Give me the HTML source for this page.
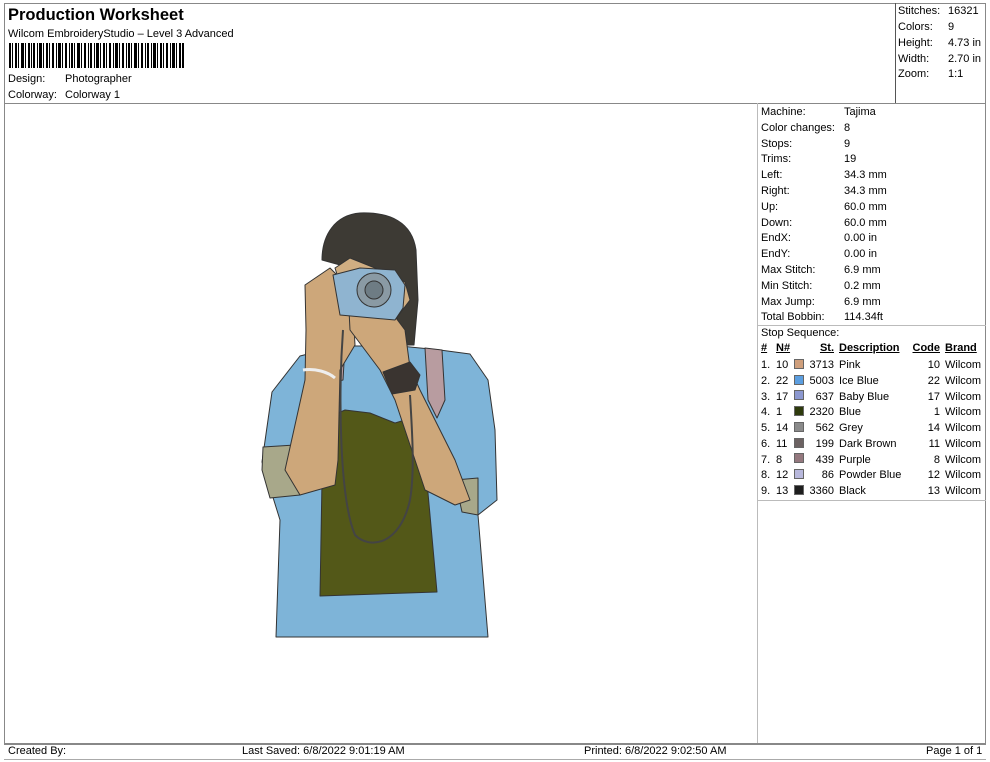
<!DOCTYPE html>
<html><head><meta charset="utf-8"><style>
*{margin:0;padding:0;box-sizing:border-box}
body{width:990px;height:762px;background:#fff;position:relative;overflow:hidden;font-family:"Liberation Sans",Arial,sans-serif;font-size:11px;color:#000}
.a{position:absolute;white-space:nowrap;line-height:13px}
.l{position:absolute;background:#888}
.sw{position:absolute;width:10px;height:10px;border:1px solid #666}
.r{text-align:right}
u{text-decoration:underline}
</style></head><body>
<div class="l" style="left:4px;top:3px;width:982px;height:1px"></div>
<div class="l" style="left:4px;top:3px;width:1px;height:741px"></div>
<div class="l" style="left:985px;top:3px;width:1px;height:741px"></div>
<div class="l" style="left:4px;top:103px;width:982px;height:1px"></div>
<div class="l" style="left:895px;top:3px;width:1px;height:100px;background:#555"></div>
<div class="l" style="left:757px;top:103px;width:1px;height:641px;background:#bbb"></div>
<div class="l" style="left:757px;top:325px;width:229px;height:1px;background:#bbb"></div>
<div class="l" style="left:757px;top:500px;width:229px;height:1px;background:#bbb"></div>
<div class="l" style="left:4px;top:743px;width:982px;height:2px"></div>
<div class="l" style="left:4px;top:759px;width:982px;height:1px;background:#aaa"></div>

<div class="a" style="left:8px;top:6px;font-size:16.5px;font-weight:bold;line-height:19px">Production Worksheet</div>
<div class="a" style="left:8px;top:28px">Wilcom EmbroideryStudio – Level 3 Advanced</div>
<svg style="position:absolute;left:9px;top:43px" width="176" height="25">
<g fill="#000">
<rect x="0" width="2" height="25"/><rect x="3" width="1" height="25"/><rect x="6" width="2" height="25"/><rect x="9" width="1" height="25"/><rect x="12" width="3" height="25"/><rect x="16" width="1" height="25"/><rect x="19" width="2" height="25"/><rect x="22" width="1" height="25"/><rect x="24" width="2" height="25"/><rect x="28" width="1" height="25"/><rect x="30" width="3" height="25"/><rect x="34" width="1" height="25"/><rect x="37" width="2" height="25"/><rect x="40" width="1" height="25"/><rect x="43" width="2" height="25"/><rect x="47" width="1" height="25"/><rect x="49" width="3" height="25"/><rect x="53" width="1" height="25"/><rect x="56" width="2" height="25"/><rect x="60" width="1" height="25"/><rect x="62" width="2" height="25"/><rect x="65" width="1" height="25"/><rect x="68" width="3" height="25"/><rect x="72" width="1" height="25"/><rect x="75" width="2" height="25"/><rect x="79" width="1" height="25"/><rect x="81" width="2" height="25"/><rect x="85" width="1" height="25"/><rect x="87" width="3" height="25"/><rect x="91" width="1" height="25"/><rect x="94" width="2" height="25"/><rect x="97" width="1" height="25"/><rect x="100" width="2" height="25"/><rect x="104" width="1" height="25"/><rect x="106" width="3" height="25"/><rect x="110" width="1" height="25"/><rect x="113" width="2" height="25"/><rect x="117" width="1" height="25"/><rect x="119" width="2" height="25"/><rect x="122" width="1" height="25"/><rect x="125" width="3" height="25"/><rect x="129" width="1" height="25"/><rect x="132" width="2" height="25"/><rect x="136" width="1" height="25"/><rect x="138" width="2" height="25"/><rect x="142" width="1" height="25"/><rect x="144" width="3" height="25"/><rect x="148" width="1" height="25"/><rect x="151" width="2" height="25"/><rect x="154" width="1" height="25"/><rect x="157" width="2" height="25"/><rect x="161" width="1" height="25"/><rect x="163" width="3" height="25"/><rect x="167" width="1" height="25"/><rect x="170" width="2" height="25"/><rect x="173" width="2" height="25"/>
</g></svg>
<div class="a" style="left:8px;top:73px">Design:</div><div class="a" style="left:65px;top:73px">Photographer</div>
<div class="a" style="left:8px;top:89px">Colorway:</div><div class="a" style="left:65px;top:89px">Colorway 1</div>

<div class="a" style="left:898px;top:5px">Stitches:</div><div class="a" style="left:948px;top:5px">16321</div>
<div class="a" style="left:898px;top:21px">Colors:</div><div class="a" style="left:948px;top:21px">9</div>
<div class="a" style="left:898px;top:37px">Height:</div><div class="a" style="left:948px;top:37px">4.73 in</div>
<div class="a" style="left:898px;top:53px">Width:</div><div class="a" style="left:948px;top:53px">2.70 in</div>
<div class="a" style="left:898px;top:68px">Zoom:</div><div class="a" style="left:948px;top:68px">1:1</div>

<div class="a" style="left:761px;top:105px;line-height:15.8px">Machine:<br>Color changes:<br>Stops:<br>Trims:<br>Left:<br>Right:<br>Up:<br>Down:<br>EndX:<br>EndY:<br>Max Stitch:<br>Min Stitch:<br>Max Jump:<br>Total Bobbin:<br>Stop Sequence:</div>
<div class="a" style="left:844px;top:105px;line-height:15.8px">Tajima<br>8<br>9<br>19<br>34.3 mm<br>34.3 mm<br>60.0 mm<br>60.0 mm<br>0.00 in<br>0.00 in<br>6.9 mm<br>0.2 mm<br>6.9 mm<br>114.34ft</div>

<div class="a" style="left:761px;top:342px;font-weight:bold"><u>#</u></div>
<div class="a" style="left:776px;top:342px;font-weight:bold"><u>N#</u></div>
<div class="a r" style="left:800px;width:34px;top:342px;font-weight:bold"><u>St.</u></div>
<div class="a" style="left:839px;top:342px;font-weight:bold"><u>Description</u></div>
<div class="a r" style="left:900px;width:40px;top:342px;font-weight:bold"><u>Code</u></div>
<div class="a" style="left:945px;top:342px;font-weight:bold"><u>Brand</u></div>

<div class="a" style="left:761px;top:358px;line-height:15.75px">1.<br>2.<br>3.<br>4.<br>5.<br>6.<br>7.<br>8.<br>9.</div>
<div class="a" style="left:776px;top:358px;line-height:15.75px">10<br>22<br>17<br>1<br>14<br>11<br>8<br>12<br>13</div>
<div class="a r" style="left:800px;width:34px;top:358px;line-height:15.75px">3713<br>5003<br>637<br>2320<br>562<br>199<br>439<br>86<br>3360</div>
<div class="a" style="left:839px;top:358px;line-height:15.75px">Pink<br>Ice Blue<br>Baby Blue<br>Blue<br>Grey<br>Dark Brown<br>Purple<br>Powder Blue<br>Black</div>
<div class="a r" style="left:900px;width:40px;top:358px;line-height:15.75px">10<br>22<br>17<br>1<br>14<br>11<br>8<br>12<br>13</div>
<div class="a" style="left:945px;top:358px;line-height:15.75px">Wilcom<br>Wilcom<br>Wilcom<br>Wilcom<br>Wilcom<br>Wilcom<br>Wilcom<br>Wilcom<br>Wilcom</div>
<div class="sw" style="left:794px;top:359px;background:#cf9f7c"></div>
<div class="sw" style="left:794px;top:375px;background:#5b9ee0"></div>
<div class="sw" style="left:794px;top:390px;background:#8c98d0"></div>
<div class="sw" style="left:794px;top:406px;background:#2e3a0c"></div>
<div class="sw" style="left:794px;top:422px;background:#8a8a8a"></div>
<div class="sw" style="left:794px;top:438px;background:#6c6262"></div>
<div class="sw" style="left:794px;top:453px;background:#94787e"></div>
<div class="sw" style="left:794px;top:469px;background:#b8b8dc"></div>
<div class="sw" style="left:794px;top:485px;background:#1e1e1e"></div>

<div class="a" style="left:8px;top:745px">Created By:</div>
<div class="a" style="left:242px;top:745px">Last Saved: 6/8/2022 9:01:19 AM</div>
<div class="a" style="left:584px;top:745px">Printed: 6/8/2022 9:02:50 AM</div>
<div class="a" style="left:926px;top:745px">Page 1 of 1</div>

<svg style="position:absolute;left:0;top:0" width="990" height="762" viewBox="0 0 990 762">
<g stroke="#333" stroke-width="1" stroke-linejoin="round">
<path d="M322,260 C322,235 335,215 360,213 C390,212 412,222 416,250 L418,300 L414,345 L400,345 L395,300 L340,265 Z" fill="#3d3a34"/>
<path d="M335,268 L350,258 L385,272 L405,282 L410,300 L395,320 L345,300 Z" fill="#d0ae82"/>
<path d="M276,637 L280,520 L262,462 L272,392 L300,356 L340,346 L400,346 L440,350 L470,354 L488,380 L495,430 L497,500 L478,515 L488,637 Z" fill="#7eb4d8"/>
<path d="M425,348 L442,350 L445,400 L437,418 L428,400 Z" fill="#b89ca0"/>
<path d="M333,350 L345,346 L343,380 L335,382 Z" fill="#b89ca0"/>
<path d="M322,420 L345,410 L370,413 L395,423 L415,417 L425,460 L437,592 L320,596 L322,480 Z" fill="#535818"/>
<path d="M263,447 L295,445 L300,495 L270,498 L262,470 Z" fill="#a8a88a"/>
<path d="M455,480 L478,478 L478,515 L462,512 Z" fill="#a8a88a"/>
<path d="M305,285 L330,268 L352,290 L355,345 L340,370 L338,460 L335,485 L300,495 L285,470 L305,380 L306,330 Z" fill="#cda77a"/>
<path d="M348,290 L375,290 L405,330 L410,368 L420,390 L455,460 L470,500 L455,505 L425,490 L395,400 L380,370 L350,330 Z" fill="#cda77a"/>
<path d="M333,275 L360,268 L395,270 L405,285 L403,308 L395,320 L340,315 Z" fill="#8fb4d0"/>
<circle cx="374" cy="290" r="17" fill="#8a9aa4"/>
<circle cx="374" cy="290" r="9" fill="#6e7c84"/>
<path d="M383,372 L410,362 L420,375 L415,390 L392,394 Z" fill="#3a3430"/>
<path d="M303,370 C315,368 328,372 335,378" stroke="#eee" stroke-width="3" fill="none"/>
<path d="M343,330 C338,400 340,500 355,535 C370,550 400,545 410,500 C415,470 412,430 410,395" fill="none" stroke="#444" stroke-width="2"/>
</g>
</svg>
</body></html>
